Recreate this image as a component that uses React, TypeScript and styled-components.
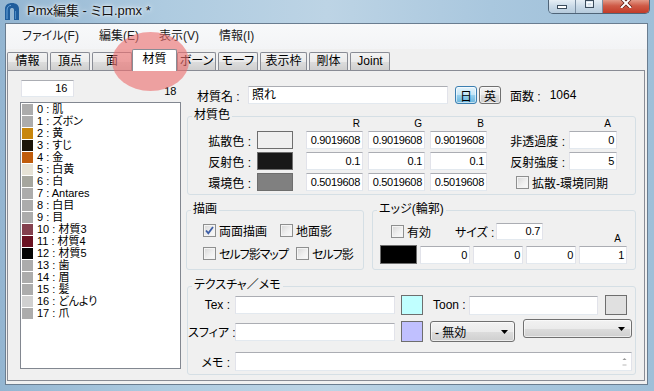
import React from "react";
import styled, { createGlobalStyle, css } from "styled-components";

interface Material {
  name: string;
  color: string;
}

interface ColorRowData {
  label: string;
  swatch: string;
  values: string[];
}

const materials: Material[] = [
  { name: "肌", color: "#acacac" },
  { name: "ズボン", color: "#acacac" },
  { name: "黄", color: "#c8860c" },
  { name: "すじ", color: "#1c1408" },
  { name: "金", color: "#c05c0c" },
  { name: "白黄", color: "#e6e2d6" },
  { name: "白", color: "#a6a69e" },
  { name: "Antares", color: "#acacac" },
  { name: "白目", color: "#acacac" },
  { name: "目", color: "#acacac" },
  { name: "材質3", color: "#84404e" },
  { name: "材質4", color: "#6a1222" },
  { name: "材質5", color: "#040404" },
  { name: "歯", color: "#acacac" },
  { name: "眉", color: "#acacac" },
  { name: "髪", color: "#acacac" },
  { name: "どんより", color: "#d0d0d0" },
  { name: "爪", color: "#acacac" },
];

const tabs = [
  { label: "情報", w: 41 },
  { label: "頂点", w: 40 },
  { label: "面", w: 40 },
  { label: "材質", w: 41, active: true },
  { label: "ボーン", w: 39 },
  { label: "モーフ", w: 40 },
  { label: "表示枠", w: 47 },
  { label: "剛体", w: 39 },
  { label: "Joint", w: 40 },
];

const menus = ["ファイル(F)", "編集(E)", "表示(V)", "情報(I)"];

const colorRows: ColorRowData[] = [
  { label: "拡散色", swatch: "#f0f0f0", values: ["0.9019608", "0.9019608", "0.9019608"] },
  { label: "反射色", swatch: "#181818", values: ["0.1", "0.1", "0.1"] },
  { label: "環境色", swatch: "#808080", values: ["0.5019608", "0.5019608", "0.5019608"] },
];

const GlobalStyle = createGlobalStyle`
  html, body {
    margin: 0;
    padding: 0;
    background: #a9c4da;
  }
  body {
    font-family: "Liberation Sans", "Noto Sans CJK JP", sans-serif;
    font-size: 12px;
    color: #000;
    font-feature-settings: "palt";
  }
  * {
    box-sizing: border-box;
  }
`;

// window frame (aero glass)
const Window = styled.div`
  position: relative;
  width: 654px;
  height: 391px;
  overflow: hidden;
  display: flex;
  flex-direction: column;
  background: linear-gradient(90deg, #93b5d1 0%, #aecbe0 25%, #bdd4e5 50%, #a9c7de 75%, #9ebfd8 100%);
`;

const TitleBar = styled.div`
  height: 23px;
  flex: none;
  display: flex;
  align-items: flex-start;
  padding-left: 3px;
`;

const AppIcon = styled.svg`
  margin-top: 2px;
  flex: none;
`;

const TitleText = styled.div`
  margin-left: 7px;
  line-height: 22px;
  font-size: 13px;
  color: #111;
  text-shadow: 0 0 6px #ffffff, 0 0 3px #ffffff;
`;

const CaptionGroup = styled.div`
  margin-left: auto;
  margin-right: 4px;
  display: flex;
  height: 14px;
  border: 1px solid #4f6478;
  border-top: none;
  border-radius: 0 0 5px 5px;
  overflow: hidden;
`;

const CaptionButton = styled.div<{ $w: number; $close?: boolean }>`
  width: ${(p) => p.$w}px;
  height: 100%;
  display: flex;
  justify-content: center;
  align-items: flex-start;
  background: ${(p) =>
    p.$close
      ? "linear-gradient(180deg, #e39a88 0%, #cf5a46 45%, #c23b28 100%)"
      : "linear-gradient(180deg, #e6eef5 0%, #c9d9e7 50%, #b6cbdd 100%)"};
  & + & {
    border-left: 1px solid #7b8fa3;
  }
`;

const Client = styled.div`
  flex: 1;
  margin: 0 6px 6px 5px;
  border: 1px solid #6a7d90;
  background: #f0f0f0;
  display: flex;
  flex-direction: column;
`;

const MenuBar = styled.div`
  height: 25px;
  flex: none;
  display: flex;
  padding-left: 6px;
  background: linear-gradient(180deg, #f8f9fa 0%, #f3f4f6 100%);
`;

const MenuItem = styled.div`
  padding: 0 10px;
  line-height: 25px;
  font-size: 12px;
  color: #1a1a1a;
`;

const TabStrip = styled.div`
  height: 21px;
  flex: none;
  display: flex;
  align-items: flex-end;
  gap: 2px;
  padding-left: 1px;
`;

const Tab = styled.div<{ $w: number; $active?: boolean }>`
  position: relative;
  width: ${(p) => p.$w + (p.$active ? 4 : 0)}px;
  height: ${(p) => (p.$active ? 22 : 18)}px;
  margin: ${(p) => (p.$active ? "0 -2px -1px" : "0")};
  border: 1px solid #898c95;
  border-bottom: ${(p) => (p.$active ? "none" : "0")};
  border-radius: 2px 2px 0 0;
  text-align: center;
  line-height: ${(p) => (p.$active ? 19 : 17)}px;
  font-size: 12px;
  background: ${(p) =>
    p.$active ? "#ffffff" : "linear-gradient(180deg, #f3f3f3 0%, #ebebeb 50%, #dddddd 51%, #cfcfcf 100%)"};
  z-index: ${(p) => (p.$active ? 3 : 0)};
`;

// hand-drawn pink marker around the active tab
const Highlight = styled.div`
  position: absolute;
  left: 112px;
  top: 32px;
  width: 77px;
  height: 59px;
  border-radius: 50%;
  background: rgba(236, 112, 112, 0.62);
  z-index: 2;
  pointer-events: none;
`;

const TabPanel = styled.div`
  flex: 1;
  margin: 0 2px 3px 1px;
  border: 1px solid #898c95;
  background: #f0f0f0;
  display: flex;
`;

const LeftPane = styled.div`
  width: 178px;
  flex: none;
  padding: 9px 0 0 12px;
  display: flex;
  flex-direction: column;
`;

const SpinRow = styled.div`
  width: 161px;
  display: flex;
  align-items: flex-end;
`;

const fieldBorder = css`
  background: #ffffff;
  border: 1px solid #e2e3ea;
  border-top-color: #abadb3;
  border-bottom-color: #e3e9ef;
`;

const numberFont = css`
  font-size: 11px;
  letter-spacing: -0.3px;
`;

const SpinBox = styled.div`
  ${fieldBorder};
  ${numberFont};
  width: 53px;
  height: 17px;
  margin-left: 1px;
  text-align: right;
  padding-right: 6px;
  line-height: 15px;
`;

const CountLabel = styled.div`
  ${numberFont};
  margin-left: auto;
  padding-right: 5px;
  line-height: 12px;
`;

const ListBox = styled.div`
  margin-top: 5px;
  width: 161px;
  height: 267px;
  border: 1px solid #828790;
  background: #ffffff;
  padding: 0 0 0 1px;
`;

const ListItem = styled.div`
  height: 12px;
  display: flex;
  align-items: center;
  white-space: nowrap;
`;

const ListText = styled.span`
  font-size: 11px;
  line-height: 11px;
`;

const ListSwatch = styled.span<{ $color: string }>`
  width: 11px;
  height: 11px;
  margin-right: 4px;
  flex: none;
  background: ${(p) => p.$color};
`;

const RightPane = styled.div`
  flex: 1;
  padding-top: 15px;
  display: flex;
  flex-direction: column;
`;

const NameRow = styled.div`
  height: 18px;
  display: flex;
  align-items: center;
  padding-left: 11px;
`;

const FieldLabel = styled.div<{ $w?: number; $right?: boolean; $pad?: number }>`
  width: ${(p) => (p.$w ? `${p.$w}px` : "auto")};
  flex: none;
  text-align: ${(p) => (p.$right ? "right" : "left")};
  padding-right: ${(p) => p.$pad ?? 0}px;
  white-space: nowrap;
  font-size: 12px;
`;

const TextBox = styled.div<{ $w: number; $h?: number }>`
  ${fieldBorder};
  width: ${(p) => p.$w}px;
  height: ${(p) => p.$h ?? 18}px;
  flex: none;
  padding-left: 3px;
  line-height: ${(p) => (p.$h ?? 18) - 2}px;
  position: relative;
`;

const NumField = styled.div<{ $w: number; $h?: number }>`
  ${fieldBorder};
  ${numberFont};
  width: ${(p) => p.$w}px;
  height: ${(p) => p.$h ?? 18}px;
  text-align: right;
  padding-right: 2px;
  line-height: ${(p) => (p.$h ?? 18) - 2}px;
`;

const LangButton = styled.div<{ $active?: boolean }>`
  width: 22px;
  height: 18px;
  margin-left: ${(p) => (p.$active ? 7 : 2)}px;
  border-radius: 3px;
  display: flex;
  align-items: center;
  justify-content: center;
  font-size: 12px;
  border: 1px solid ${(p) => (p.$active ? "#3c7fb1" : "#707070")};
  background: ${(p) =>
    p.$active
      ? "linear-gradient(180deg, #e5f4fc 0%, #c4e5f6 50%, #98d1ef 51%, #68b3db 100%)"
      : "linear-gradient(180deg, #f2f2f2 0%, #ebebeb 50%, #dddddd 51%, #cfcfcf 100%)"};
  box-shadow: inset 0 0 0 1px rgba(255, 255, 255, 0.6);
`;

const FaceCount = styled.div`
  margin-left: 9px;
  display: flex;
  align-items: center;
  gap: 9px;
`;

const GroupBox = styled.div<{ $w: number; $ml?: number; $mt?: number }>`
  width: ${(p) => p.$w}px;
  margin-left: ${(p) => p.$ml ?? 0}px;
  margin-top: ${(p) => p.$mt ?? 0}px;
  border: 1px solid #d5dfe5;
  border-radius: 3px;
  flex: none;
`;

const GroupTitle = styled.div`
  display: table;
  margin: -9px 0 0 4px;
  padding: 0 2px;
  height: 14px;
  line-height: 14px;
  background: #f0f0f0;
  font-size: 12px;
`;

const ColorGrid = styled.div`
  display: grid;
  grid-template-columns: 69px 49px 62px 62px 62px 77px 48px;
  grid-template-rows: 8px 18px 18px 18px;
  row-gap: 3px;
  align-items: center;
  margin-top: -2px;
  padding-bottom: 3px;
`;

const HeadCell = styled.div<{ $pad?: number; $w?: number }>`
  width: ${(p) => p.$w ?? 57}px;
  text-align: right;
  padding-right: ${(p) => p.$pad ?? 3}px;
  font-size: 10px;
  line-height: 8px;
`;

const ColorSwatch = styled.div<{ $color: string; $w?: number; $h?: number; $ml?: number }>`
  width: ${(p) => p.$w ?? 36}px;
  height: ${(p) => p.$h ?? 18}px;
  margin-left: ${(p) => p.$ml ?? 0}px;
  flex: none;
  background: ${(p) => p.$color};
  border: 1px solid #6e6e6e;
`;

const SyncCell = styled.div`
  grid-column: span 2;
  padding-left: 24px;
`;

const CheckItem = styled.div<{ $w?: number; $tight?: boolean }>`
  display: flex;
  align-items: center;
  gap: 3px;
  width: ${(p) => (p.$w ? `${p.$w}px` : "auto")};
  flex: none;
  white-space: nowrap;
  letter-spacing: ${(p) => (p.$tight ? "-1px" : "0")};
`;

const CheckBox = styled.span`
  width: 13px;
  height: 13px;
  flex: none;
  border: 1px solid #8e8f8f;
  background: linear-gradient(135deg, #d6d6d6 0%, #efefef 55%, #fbfbfb 100%);
  box-shadow: inset 0 0 0 1px #f4f4f4;
  display: flex;
  align-items: center;
  justify-content: center;
`;

const LowerRow = styled.div`
  display: flex;
  gap: 8px;
  margin-top: 15px;
`;

const CheckRow = styled.div<{ $mt: number; $mb?: number }>`
  display: flex;
  align-items: center;
  height: 14px;
  margin-top: ${(p) => p.$mt}px;
  margin-bottom: ${(p) => p.$mb ?? 0}px;
  padding-left: 16px;
`;

const EdgeTop = styled.div`
  display: flex;
  height: 17px;
  margin-top: 7px;
  padding: 0 9px 0 18px;
  align-items: center;
`;

const CornerLabel = styled.div`
  margin-left: auto;
  width: 48px;
  align-self: flex-end;
  text-align: right;
  padding-right: 5px;
  font-size: 10px;
  line-height: 8px;
  margin-bottom: -3px;
`;

const EdgeGrid = styled.div`
  display: grid;
  grid-template-columns: 37px 50px 50px 50px 48px;
  column-gap: 3px;
  height: 19px;
  align-items: center;
  margin-top: 5px;
  padding: 0 0 5px 7px;
  box-sizing: content-box;
`;

const TexGroup = styled(GroupBox)`
  padding-bottom: 3px;
`;

const TexRow = styled.div<{ $mt: number; $h: number }>`
  display: flex;
  align-items: center;
  height: ${(p) => p.$h}px;
  margin-top: ${(p) => p.$mt}px;
`;

const Combo = styled.div<{ $w: number; $h: number; $ml: number; $raise?: number }>`
  width: ${(p) => p.$w}px;
  height: ${(p) => p.$h}px;
  margin-left: ${(p) => p.$ml}px;
  margin-top: ${(p) => -(p.$raise ?? 0) * 2}px;
  flex: none;
  border: 1px solid #707070;
  border-radius: 3px;
  background: linear-gradient(180deg, #f2f2f2 0%, #ebebeb 50%, #dddddd 51%, #cfcfcf 100%);
  box-shadow: inset 0 0 0 1px rgba(255, 255, 255, 0.6);
  display: flex;
  align-items: center;
  padding: 0 6px 0 4px;
  font-size: 12px;
`;

const ComboArrow = styled.svg`
  margin-left: auto;
`;

const ScrollHint = styled.svg`
  position: absolute;
  right: 4px;
  top: 4px;
`;

const Arrow = () => (
  <ComboArrow width="7" height="4" viewBox="0 0 7 4">
    <path d="M0 0H7L3.5 4Z" fill="#000" />
  </ComboArrow>
);

const Check: React.FC<{ checked?: boolean }> = ({ checked }) => (
  <CheckBox>
    {checked && (
      <svg width="9" height="9" viewBox="0 0 9 9">
        <path d="M1 4.5L3.3 7.2L8 1" stroke="#3d5ea6" strokeWidth="1.8" fill="none" />
      </svg>
    )}
  </CheckBox>
);

const App: React.FC = () => {
  return (
    <Window>
      <GlobalStyle />
      <TitleBar>
        <AppIcon width="17" height="18" viewBox="0 0 17 18">
          <path d="M2 18V7C2 3 5 1 9 1C13 1 16 3 16 7V18H11V8C11 6.5 10 6 9 6C8 6 7 6.5 7 8V18Z" fill="#1f5d9c" />
          <path d="M4 17V8C4 5 6 3.5 8 3.3" stroke="#6aa6dc" strokeWidth="1" fill="none" />
          <path d="M12.5 17V9" stroke="#4f8cc4" strokeWidth="1" />
        </AppIcon>
        <TitleText>Pmx編集 - ミロ.pmx *</TitleText>
        <CaptionGroup>
          <CaptionButton $w={26}>
            <svg width="10" height="9" viewBox="0 0 10 9">
              <rect x="0.5" y="5.5" width="9" height="3" fill="#fff" stroke="#3c4c5c" />
            </svg>
          </CaptionButton>
          <CaptionButton $w={27}>
            <svg width="9" height="8" viewBox="0 0 9 8">
              <rect x="0.5" y="0.5" width="8" height="7" fill="none" stroke="#3c4c5c" />
              <rect x="2" y="2.5" width="5" height="3.5" fill="none" stroke="#fff" />
            </svg>
          </CaptionButton>
          <CaptionButton $w={47} $close>
            <svg width="12" height="8" viewBox="0 0 12 8">
              <path d="M1 -2L11 8M11 -2L1 8" stroke="#5a1a12" strokeWidth="3.4" />
              <path d="M1 -2L11 8M11 -2L1 8" stroke="#fff" strokeWidth="2" />
            </svg>
          </CaptionButton>
        </CaptionGroup>
      </TitleBar>

      <Client>
        <MenuBar>
          {menus.map((m) => (
            <MenuItem key={m}>{m}</MenuItem>
          ))}
        </MenuBar>
        <TabStrip>
          {tabs.map((t) => (
            <Tab key={t.label} $w={t.w} $active={t.active}>
              {t.label}
            </Tab>
          ))}
        </TabStrip>
        <TabPanel>
          <LeftPane>
            <SpinRow>
              <SpinBox>16</SpinBox>
              <CountLabel>18</CountLabel>
            </SpinRow>
            <ListBox>
              {materials.map((m, i) => (
                <ListItem key={i}>
                  <ListSwatch $color={m.color} />
                  <ListText>{`${i} : ${m.name}`}</ListText>
                </ListItem>
              ))}
            </ListBox>
          </LeftPane>

          <RightPane>
            <NameRow>
              <FieldLabel $w={51}>材質名 :</FieldLabel>
              <TextBox $w={200}>照れ</TextBox>
              <LangButton $active>日</LangButton>
              <LangButton>英</LangButton>
              <FaceCount>
                <span>面数 :</span>
                <span>1064</span>
              </FaceCount>
            </NameRow>

            <GroupBox $w={449} $ml={1} $mt={12}>
              <GroupTitle>材質色</GroupTitle>
              <ColorGrid>
                <span />
                <span />
                <HeadCell>R</HeadCell>
                <HeadCell>G</HeadCell>
                <HeadCell>B</HeadCell>
                <span />
                <HeadCell $pad={6} $w={48}>A</HeadCell>
                {colorRows.map((r, i) => (
                  <React.Fragment key={r.label}>
                    <FieldLabel $right $pad={6}>{r.label} :</FieldLabel>
                    <ColorSwatch $color={r.swatch} />
                    {r.values.map((v, j) => (
                      <NumField key={j} $w={57}>{v}</NumField>
                    ))}
                    {i === 0 && (
                      <>
                        <FieldLabel $right $pad={4}>非透過度 :</FieldLabel>
                        <NumField $w={48}>0</NumField>
                      </>
                    )}
                    {i === 1 && (
                      <>
                        <FieldLabel $right $pad={4}>反射強度 :</FieldLabel>
                        <NumField $w={48}>5</NumField>
                      </>
                    )}
                    {i === 2 && (
                      <SyncCell>
                        <CheckItem>
                          <Check />
                          拡散-環境同期
                        </CheckItem>
                      </SyncCell>
                    )}
                  </React.Fragment>
                ))}
              </ColorGrid>
            </GroupBox>

            <LowerRow>
              <GroupBox $w={178}>
                <GroupTitle>描画</GroupTitle>
                <CheckRow $mt={7}>
                  <CheckItem $w={77}>
                    <Check checked />
                    両面描画
                  </CheckItem>
                  <CheckItem>
                    <Check />
                    地面影
                  </CheckItem>
                </CheckRow>
                <CheckRow $mt={9} $mb={9}>
                  <CheckItem $w={93} $tight>
                    <Check />
                    セルフ影マップ
                  </CheckItem>
                  <CheckItem $tight>
                    <Check />
                    セルフ影
                  </CheckItem>
                </CheckRow>
              </GroupBox>

              <GroupBox $w={264}>
                <GroupTitle>エッジ(輪郭)</GroupTitle>
                <EdgeTop>
                  <CheckItem $w={64}>
                    <Check />
                    有効
                  </CheckItem>
                  <FieldLabel $w={41}>サイズ :</FieldLabel>
                  <NumField $w={47} $h={17}>0.7</NumField>
                  <CornerLabel>A</CornerLabel>
                </EdgeTop>
                <EdgeGrid>
                  <ColorSwatch $color="#000000" $w={37} $h={19} />
                  <NumField $w={50}>0</NumField>
                  <NumField $w={50}>0</NumField>
                  <NumField $w={50}>0</NumField>
                  <NumField $w={48}>1</NumField>
                </EdgeGrid>
              </GroupBox>
            </LowerRow>

            <TexGroup $w={449} $ml={1} $mt={16}>
              <GroupTitle>テクスチャ／メモ</GroupTitle>
              <TexRow $mt={3} $h={20}>
                <FieldLabel $w={47} $right $pad={5}>Tex :</FieldLabel>
                <TextBox $w={160} />
                <ColorSwatch $color="#c0ffff" $w={22} $h={20} $ml={6} />
                <FieldLabel $w={46} $pad={0} style={{ paddingLeft: 10 }}>Toon :</FieldLabel>
                <TextBox $w={129} $h={19} />
                <ColorSwatch $color="#e0e0e0" $w={22} $h={20} $ml={7} />
              </TexRow>
              <TexRow $mt={6} $h={21}>
                <FieldLabel $w={47} $right $pad={5}>スフィア :</FieldLabel>
                <TextBox $w={160} />
                <ColorSwatch $color="#c0c0ff" $w={22} $h={21} $ml={6} />
                <Combo $w={85} $h={21} $ml={7}>
                  - 無効
                  <Arrow />
                </Combo>
                <Combo $w={109} $h={19} $ml={8} $raise={3}>
                  <Arrow />
                </Combo>
              </TexRow>
              <TexRow $mt={10} $h={19}>
                <FieldLabel $w={47} $right $pad={5}>メモ :</FieldLabel>
                <TextBox $w={397} $h={19}>
                  <ScrollHint width="5" height="10" viewBox="0 0 5 10">
                    <path d="M0.5 3L2.5 1L4.5 3Z" fill="#9a9a9a" />
                    <path d="M0.5 8H4.5" stroke="#b8b8b8" />
                  </ScrollHint>
                </TextBox>
              </TexRow>
            </TexGroup>
          </RightPane>
        </TabPanel>
      </Client>
      <Highlight />
    </Window>
  );
};

export default App;
